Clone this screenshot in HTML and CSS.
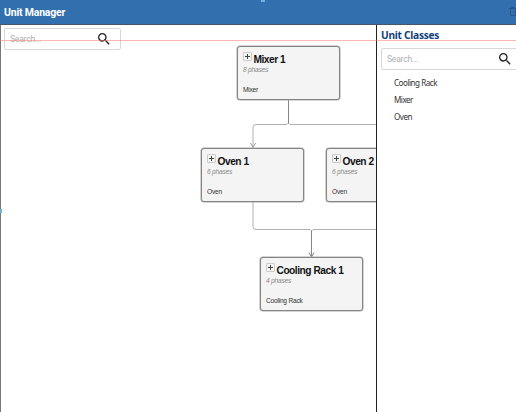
FILE: index.html
```html
<!DOCTYPE html>
<html lang="en">
<head>
<meta charset="utf-8">
<title>Unit Manager</title>
<link rel="stylesheet" href="styles.css">
</head>
<body>
<div class="app">
  <header class="topbar">
    <h1>Unit Manager</h1>
    <svg class="trash" width="8" height="10" viewBox="0 0 8 10"><path d="M0 1.5H8M2.5 1.5V.5H5.5V1.5M1.5 2.5V8.5H6.5V2.5"/></svg>
  </header>
  <div class="body">
    <main class="canvas">
      <div class="search search-main"><span>Search...</span>
        <svg width="12" height="12" viewBox="3 3 18 18"><path d="M15.5 14h-.79l-.28-.27A6.47 6.47 0 0 0 16 9.5 6.5 6.5 0 1 0 9.5 16c1.61 0 3.09-.59 4.23-1.57l.27.28v.79l5 4.99L20.49 19l-4.99-5zm-6 0C7.01 14 5 11.99 5 9.5S7.01 5 9.5 5 14 7.01 14 9.5 11.99 14 9.5 14z"/></svg>
      </div>
      <svg class="links" width="376" height="387" viewBox="0 25 376 387">
        <path d="M288.5 100V124"/>
        <path class="light" d="M376 124.5H290L288.5 123L287 124.5H256Q253 124.5 253 127.5V147"/>
        <path class="mid" d="M250.5 143L253 147.5L255.5 143"/>
        <path class="light" d="M253 202V226.5Q253 229.5 256 229.5H310L311.5 231L313 229.5H376"/>
        <path d="M311.5 230.5V257M309 252.5L311.5 257L314 252.5"/>
      </svg>
      <article class="node mixer"><div class="name"><i class="plus"></i><h2>Mixer 1</h2></div><em>8 phases</em><p>Mixer</p></article>
      <article class="node oven-one"><div class="name"><i class="plus"></i><h2>Oven 1</h2></div><em>6 phases</em><p>Oven</p></article>
      <article class="node oven-two"><div class="name"><i class="plus"></i><h2>Oven 2</h2></div><em>6 phases</em><p>Oven</p></article>
      <article class="node rack"><div class="name"><i class="plus"></i><h2>Cooling Rack 1</h2></div><em>4 phases</em><p>Cooling Rack</p></article>
    </main>
    <aside class="classes">
      <h2>Unit Classes</h2>
      <div class="search"><span>Search...</span>
        <svg width="12" height="12" viewBox="3 3 18 18"><path d="M15.5 14h-.79l-.28-.27A6.47 6.47 0 0 0 16 9.5 6.5 6.5 0 1 0 9.5 16c1.61 0 3.09-.59 4.23-1.57l.27.28v.79l5 4.99L20.49 19l-4.99-5zm-6 0C7.01 14 5 11.99 5 9.5S7.01 5 9.5 5 14 7.01 14 9.5 11.99 14 9.5 14z"/></svg>
      </div>
      <ul><li>Cooling Rack</li><li>Mixer</li><li>Oven</li></ul>
    </aside>
  </div>
  <div class="guide"></div>
  <div class="handle handle-top"></div>
  <div class="handle handle-left"></div>
</div>
</body>
</html>
```
FILE: styles.css
```css
* { box-sizing: border-box; }
body, h1, h2, p, ul { margin: 0; padding: 0; }
body { background: #fff; overflow: hidden; }
.app {
  position: relative;
  display: flex;
  flex-direction: column;
  width: 516px;
  height: 412px;
  overflow: hidden;
  font-family: Roboto, sans-serif;
}
.topbar {
  display: flex;
  align-items: center;
  justify-content: space-between;
  flex: none;
  height: 25px;
  padding-left: 4px;
  background: #326fae;
  border-bottom: 1px solid #45566b;
}
.topbar h1 { padding-top: 1px; font-size: 10.5px; line-height: 24px; font-weight: 700; letter-spacing: -.2px; color: #fff; }
.trash { fill: none; stroke: #28568a; stroke-width: 1; margin-right: -1px; }
.body { display: flex; flex: 1; }
.canvas {
  position: relative;
  flex: none;
  width: 376px;
  border-left: 1px solid #777;
  overflow: hidden;
}
.search {
  display: flex;
  align-items: center;
  justify-content: space-between;
  height: 22px;
  padding: 0 10px 0 5px;
  border: 1px solid #d8d8d8;
  border-radius: 2px;
  background: #fff;
  font-size: 8.6px;
  letter-spacing: -.25px;
  color: #b0b0b0;
}
.search svg { fill: #222; }
.search-main { width: 117px; margin: 3px 0 0 3px; }
.links { position: absolute; left: -1px; top: 0; fill: none; stroke: #858585; stroke-width: 1; }
.links .light { stroke: #b0b0b0; }
.links .mid { stroke: #999; }
.node {
  position: absolute;
  width: 103px;
  height: 54px;
  padding: 5px 5px 0;
  border: 1px solid #858585;
  border-radius: 3px;
  box-shadow: 0 0 0 .5px #aaa;
  background: #f4f4f4;
  font-family: "Liberation Sans", sans-serif;
}
.mixer { left: 236px; top: 21px; }
.oven-one { left: 200px; top: 123px; }
.oven-two { left: 325px; top: 123px; }
.rack { left: 259px; top: 232px; }
.name { display: flex; height: 14px; }
.name h2 { margin-left: 1.5px; font-size: 10.2px; line-height: 15px; letter-spacing: -.48px; color: #111; white-space: nowrap; }
.plus {
  position: relative;
  flex: none;
  width: 9px;
  height: 9px;
  border: 1px solid #ccc;
  border-radius: 1px;
}
.plus::before, .plus::after { content: ""; position: absolute; background: #444; }
.plus::before { left: 1px; top: 3px; width: 5px; height: 1px; }
.plus::after { left: 3px; top: 1px; width: 1px; height: 5px; }
.node em, .node p { font-size: 6.6px; line-height: 8px; letter-spacing: -.22px; }
.node em { display: block; color: #888; }
.node p { margin-top: 12px; color: #333; }
.classes {
  width: 140px;
  flex: none;
  border-left: 1px solid #222;
  font-family: "Noto Sans", sans-serif;
}
.classes h2 { margin: 3px 0 0 4px; font-size: 10.2px; line-height: 14px; letter-spacing: -.28px; color: #113f7c; }
.classes .search { width: 140px; margin: 6px 0 0 4px; padding-right: 9px; font-family: Roboto, sans-serif; }
.classes ul { margin-top: 4px; padding-left: 17px; list-style: none; }
.classes li { height: 17px; font-size: 8.1px; line-height: 17px; letter-spacing: -.5px; color: #333; }
.guide { position: absolute; left: 0; top: 40px; width: 516px; height: 1px; background: rgba(250, 115, 105, .5); }
.handle { position: absolute; background: #6eb4dc; }
.handle-top { left: 261px; top: 0; width: 4px; height: 2px; }
.handle-left { left: 0; top: 209px; width: 2px; height: 4px; }
```
